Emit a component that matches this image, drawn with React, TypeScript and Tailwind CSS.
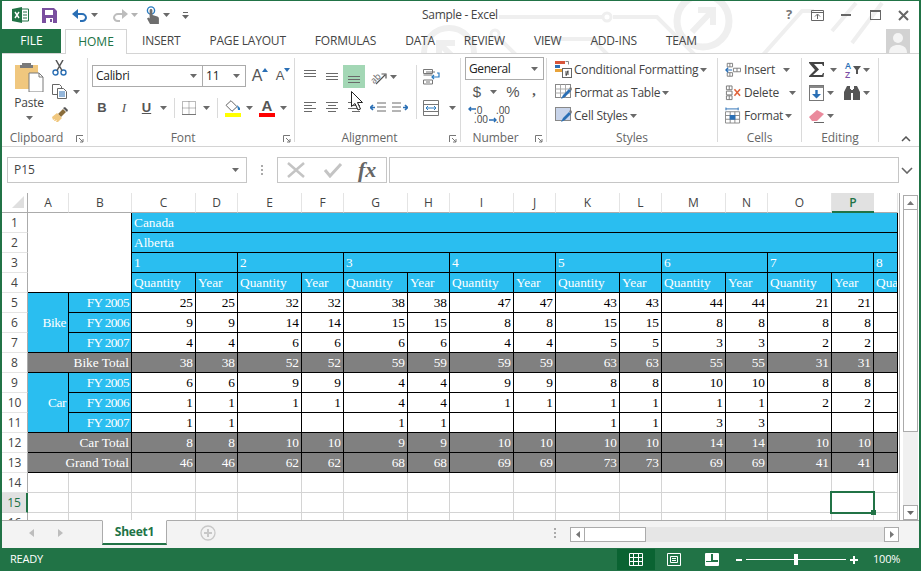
import type { ReactNode } from "react";

const ui = "font-['Open_Sans',sans-serif]";

const Caret = ({ className = "" }: { className?: string }) => (
  <svg width="7" height="4" viewBox="0 0 7 4" className={`shrink-0 ${className}`}>
    <path d="M0 0h7L3.5 4z" fill="#6a6a6a" />
  </svg>
);

const Launcher = () => (
  <svg width="8" height="8" viewBox="0 0 8 8" className="absolute right-[3px] top-[5px]">
    <path d="M0.5 7V0.5H7M3 3l4 4M4 7h3V4" fill="none" stroke="#777" strokeWidth="1" />
  </svg>
);

const Slot = ({ className = "", children }: { className?: string; children?: ReactNode }) => (
  <div className={`flex shrink-0 items-center justify-center ${className}`}>{children}</div>
);

const Lines = ({ rows, dy = 0 }: { rows: [number, number][]; dy?: number }) => (
  <svg width="16" height="14" viewBox="0 0 16 14">
    {rows.map(([a, b], i) => (
      <rect key={i} x={a} y={dy + i * 3} width={b - a} height="1" fill="#6a6a6a" />
    ))}
  </svg>
);

const Watermark = () => (
  <svg width="921" height="53" viewBox="0 0 921 53" className="absolute left-0 top-0" fill="none" stroke="#efefef">
    <circle cx="701" cy="20" r="26" strokeWidth="7" />
    <path d="M690 31l20-21M696 9h15v15" strokeWidth="6" />
    <circle cx="447" cy="52" r="25" strokeWidth="6" />
    <path d="M457 62l-18-18M437 58V42h16" strokeWidth="6" />
    <path d="M497 16h103M611 16h44l42 42" strokeWidth="4" />
    <circle cx="605" cy="16" r="4" strokeWidth="3" />
    <circle cx="493" cy="33" r="4" strokeWidth="3" />
    <path d="M496 36l18 18M540 38h50l20 20M760 55l40-45 12 0M830 30l24-28M880 2l-30 40" strokeWidth="4" />
  </svg>
);

const ExcelLogo = () => (
  <svg width="17" height="16" viewBox="0 0 17 16">
    <path d="M9 2h7.5v12H9z" fill="#fff" stroke="#217346" />
    <path d="M11 5h4M11 8h4M11 11h4" stroke="#217346" />
    <path d="M0 2l10-2v16L0 14z" fill="#217346" />
    <path d="M3 5l4 6M7 5l-4 6" stroke="#fff" strokeWidth="1.4" />
  </svg>
);

const SaveIcon = () => (
  <svg width="15" height="15" viewBox="0 0 15 15">
    <path d="M0 0h12l3 3v12H0z" fill="#7a4f9f" />
    <rect x="3" y="2" width="8" height="5" fill="#fff" />
    <rect x="4" y="10" width="7" height="5" fill="#fff" />
    <rect x="8" y="11" width="2" height="3" fill="#7a4f9f" />
  </svg>
);

const UndoIcon = ({ color, flip = false }: { color: string; flip?: boolean }) => (
  <svg width="16" height="13" viewBox="0 0 16 13" className={flip ? "-scale-x-100" : ""}>
    <path d="M2 5h8a4 4 0 0 1 4 4 4 4 0 0 1-4 3H8" fill="none" stroke={color} strokeWidth="2" />
    <path d="M6 0v10L0 5z" fill={color} />
  </svg>
);

const TouchIcon = () => (
  <svg width="13" height="18" viewBox="0 0 13 18">
    <circle cx="5" cy="4.5" r="3.6" fill="none" stroke="#2a7bc0" strokeWidth="1.4" />
    <path d="M3.6 4.5a1.4 1.4 0 0 1 2.8 0V9l5 1.5q1.5.5 1.5 2V18H4L1 12.5l1.5-1L3.6 12.5z" fill="#6e6e6e" />
  </svg>
);

const PasteIcon = () => (
  <svg width="30" height="30" viewBox="0 0 30 30">
    <path d="M1 3h23v24H1z" fill="#f0c77e" />
    <path d="M8 3V1h9v2h2v3H6V3z" fill="#7a7a7a" />
    <path d="M15 11h10l4 4v15H15z" fill="#fff" stroke="#7a7a7a" />
    <path d="M25 11v4h4" fill="none" stroke="#7a7a7a" />
  </svg>
);

const CutIcon = () => (
  <svg width="15" height="16" viewBox="0 0 15 16" fill="none" stroke="#2a6fb5" strokeWidth="1.4">
    <circle cx="3.5" cy="12.5" r="2.5" />
    <circle cx="11.5" cy="12.5" r="2.5" />
    <path d="M5 10.5L11 0M10 10.5L4 0" stroke="#555" strokeWidth="1.5" />
  </svg>
);

const CopyIcon = () => (
  <svg width="15" height="15" viewBox="0 0 15 15" fill="#fff" stroke="#666">
    <path d="M.5.5h7l2 2v8H.5z" />
    <path d="M5.5 4.5h6l3 3v7h-9z" />
    <path d="M7 8h6M7 10h6M7 12h6" stroke="#2a6fb5" />
  </svg>
);

const PainterIcon = () => (
  <svg width="16" height="15" viewBox="0 0 16 15">
    <path d="M6 7l5-5 3 3-5 5z" fill="#8a6d3b" />
    <path d="M11 1l2-1 3 3-1 2z" fill="#555" />
    <path d="M0 10l5-4 5 5-4 4H4l1-2-2 1-1 0 1-2-2 1z" fill="#f0c77e" />
  </svg>
);

const GrowA = ({ size, up }: { size: string; up: boolean }) => (
  <div className="flex items-start">
    <span className={`${size} leading-[18px] text-[#555] font-['Liberation_Sans',sans-serif]`}>A</span>
    <svg width="6" height="4" viewBox="0 0 6 4" className="mt-[1px]">
      <path d={up ? "M0 4h6L3 0z" : "M0 0h6L3 4z"} fill="#2a6fb5" />
    </svg>
  </div>
);

const BordersIcon = () => (
  <svg width="14" height="14" viewBox="0 0 14 14" fill="none" stroke="#777" strokeDasharray="1 1">
    <path d="M.5.5h13v13H.5zM7 .5v13M.5 7h13" />
    <path d="M0 13.5h14" strokeDasharray="none" />
  </svg>
);

const FillIcon = () => (
  <div className="flex flex-col items-center">
    <svg width="16" height="12" viewBox="0 0 16 12">
      <path d="M6 0.7l6 6-5 4.6-6-6z" fill="#fff" stroke="#666" />
      <path d="M12 5l3 3v2h-2z" fill="#2a7bc0" />
    </svg>
    <div className="mt-[1px] h-[4px] w-[16px] bg-[#ffff00]" />
  </div>
);

const FontColorIcon = () => (
  <div className="flex flex-col items-center">
    <span className="h-[13px] text-[15px] font-semibold leading-[13px] text-[#555] font-['Liberation_Sans',sans-serif]">A</span>
    <div className="mt-[1px] h-[4px] w-[16px] bg-[#ff0000]" />
  </div>
);

const OrientIcon = () => (
  <svg width="18" height="16" viewBox="0 0 18 16" fill="none" className="overflow-visible">
    <text x="1" y="14" transform="rotate(-45 4 11)" fontSize="9" fill="#666" stroke="none">ab</text>
    <path d="M6 15L15 6M11.500 5H16v4.500" stroke="#555" strokeWidth="1.200" />
  </svg>
);

const WrapIcon = () => (
  <svg width="17" height="16" viewBox="0 0 17 16" fill="none">
    <path d="M.5.5h9v4h-9zM.5 11h9v4h-9z" stroke="#777" />
    <path d="M.5 6h9" stroke="#777" />
    <path d="M3 3h9M3 13h4" stroke="#777" />
    <path d="M14 4h2v4h-7M11 6l-2 2 2 2" stroke="#2a7bc0" strokeWidth="1.2" />
  </svg>
);

const MergeIcon = () => (
  <svg width="16" height="16" viewBox="0 0 16 16" fill="none" stroke="#777">
    <path d="M.5.5h15v15H.5zM.5 4.5h15M.5 11.5h15" />
    <path d="M3 8h10M5 6L3 8l2 2M11 6l2 2-2 2" stroke="#2a7bc0" />
  </svg>
);

const IndentIcon = ({ flip = false }: { flip?: boolean }) => (
  <svg width="16" height="11" viewBox="0 0 16 11" className={flip ? "-scale-x-100" : ""}>
    <path d="M7 1h9M7 5h9M7 9h9" stroke="#6a6a6a" />
    <path d="M0 5.5h5M3 3L.5 5.5 3 8" fill="none" stroke="#2a6fb5" strokeWidth="1.6" />
  </svg>
);

const DecimalIcon = ({ more }: { more: boolean }) => (
  <div className="relative h-[18px] w-[18px]">
    <span className="absolute left-[5px] top-0 text-[10px] leading-[9px] text-[#444]">{more ? ".0" : ".00"}</span>
    <span className="absolute left-[5px] top-[9px] text-[10px] leading-[9px] text-[#444]">{more ? ".00" : ".0"}</span>
    <svg width="8" height="6" viewBox="0 0 8 6" className={`absolute ${more ? "left-[-1px] top-0" : "left-[-2px] top-[11px]"}`}>
      <path d={more ? "M8 3H1M3 1L1 3l2 2" : "M0 3h7M5 1l2 2-2 2"} fill="none" stroke="#2a6fb5" strokeWidth="1.4" />
    </svg>
  </div>
);

const CondIcon = () => (
  <svg width="17" height="17" viewBox="0 0 17 17">
    <rect x="0" y="0" width="10" height="3" fill="#d8553a" />
    <rect x="0" y="4" width="5" height="3" fill="#2a6fb5" />
    <rect x="0" y="8" width="7" height="3" fill="#e8a33a" />
    <path d="M10.5 0.5h3v3M5 11.5" fill="none" stroke="#888" />
    <rect x="7.5" y="7.5" width="9" height="9" fill="#fff" stroke="#666" />
    <path d="M10 11h4M10 13h4M13 9.5l-2 5.5" stroke="#444" fill="none" />
  </svg>
);

const TableIcon = ({ filled = false }: { filled?: boolean }) => (
  <svg width="17" height="17" viewBox="0 0 17 17">
    <rect x="0.5" y="0.5" width="15" height="13" fill={filled ? "#c8d4ea" : "#fff"} stroke="#888" />
    {!filled && <path d="M.5 5h15M.5 9h15M5.5.5v13M10.5.5v13" stroke="#aaa" />}
    <path d="M6 15l2-4 6-6 2 2-6 6z" fill="#2a6fb5" />
    <path d="M14 4l2-1 1 2-1 2z" fill="#777" />
  </svg>
);

const CellsInsert = () => (
  <svg width="16" height="16" viewBox="0 0 18 16" fill="none" stroke="#777">
    <path d="M2.5.5h6v4h-6zM2.5 11h6v4h-6zM5.500.5v4M5.500 11v4" />
    <path d="M9.500 6h8v4h-8zM13.500 6v4" />
    <path d="M8 8H1M3.500 5.500L1 8l2.500 2.500" stroke="#2a6fb5" strokeWidth="1.400" />
  </svg>
);

const CellsDelete = () => (
  <svg width="16" height="16" viewBox="0 0 17 16" fill="none" stroke="#777">
    <path d="M1.500.5h6v4h-6zM1.500 11h6v4h-6zM4.500.5v4M4.500 11v4M1.500 6h6v4h-6z" />
    <path d="M10 4l6 7M16 4l-6 7" stroke="#e0643c" strokeWidth="1.700" />
  </svg>
);

const CellsFormat = () => (
  <svg width="16" height="17" viewBox="0 0 17 17" fill="none" stroke="#888">
    <path d="M.5 4.500h15v12H.5zM.5 8.500h15M.5 12.500h15M5.500 4.500v12M10.500 4.500v12" />
    <rect x="5" y="8" width="6" height="5" fill="#2a6fb5" stroke="none" />
    <path d="M1 1.500h13M1 0v3M14 0v3" stroke="#2a6fb5" />
  </svg>
);

const SigmaIcon = () => (
  <svg width="16" height="15" viewBox="0 0 16 15">
    <path d="M0 0h15v4h-1l-1-2H5l5 5.500L4 13h9l1-2h1l-.5 4H0v-1l6-6L0 1z" fill="#444" />
  </svg>
);

const SortIcon = () => (
  <div className="relative h-[18px] w-[17px]">
    <span className="absolute left-0 top-0 text-[9px] font-semibold leading-[9px] text-[#2a6fb5]">A</span>
    <span className="absolute left-0 top-[9px] text-[9px] font-semibold leading-[9px] text-[#7b4fa6]">Z</span>
    <svg width="8" height="8" viewBox="0 0 8 8" className="absolute left-[8px] top-[5px]">
      <path d="M0 0h8L5 4v4H3V4z" fill="#555" />
    </svg>
  </div>
);

const FillDownIcon = () => (
  <svg width="15" height="16" viewBox="0 0 15 16">
    <rect x="0.500" y="0.500" width="14" height="15" fill="#fff" stroke="#777" />
    <rect x="1" y="1" width="13" height="2" fill="#888" />
    <path d="M6.300 5h2.400v4H12l-4.500 4.500L3 9h3.300z" fill="#2a6fb5" />
  </svg>
);

const BinocularsIcon = () => (
  <svg width="16" height="14" viewBox="0 0 16 14" fill="#555">
    <path d="M3 0h3v3h1v7H0V6zM10 0h3l3 6v4H9V3h1z" />
    <rect x="0" y="10" width="7" height="4" />
    <rect x="9" y="10" width="7" height="4" />
    <rect x="7" y="4" width="2" height="3" />
  </svg>
);

const EraserIcon = () => (
  <svg width="16" height="14" viewBox="0 0 16 14">
    <path d="M0 8l8-7 7 4-7 7H3z" fill="#ea8a9c" />
    <path d="M5 13.500h10" stroke="#666" />
  </svg>
);

const Group = ({ className, label, launcher, children }: { className: string; label: string; launcher?: boolean; children: ReactNode }) => (
  <div className={`flex h-full shrink-0 flex-col border-r border-[#dadada] ${className}`}>
    <div className="min-h-0 flex-1">{children}</div>
    <div className={`relative mb-[-4px] h-[16px] text-center text-[12px] leading-[16px] tracking-[-0.1px] text-[#666] ${launcher ? "pr-[16px]" : ""}`}>
      {label}
      {launcher && <Launcher />}
    </div>
  </div>
);

const StyleRow = ({ icon, label, caretClass = "ml-[2px]" }: { icon: ReactNode; label: string; caretClass?: string }) => (
  <div className="flex h-[23px] items-center">
    <div className="flex w-[19px] shrink-0">{icon}</div>
    <span className="text-[12px] tracking-[-0.2px] text-[#444]">{label}</span>
    <Caret className={caretClass} />
  </div>
);

const Ribbon = () => (
  <div className="flex h-[93px] shrink-0 border-b border-[#d4d4d4] pb-[4px] pl-0 pt-[4px]">
    <Group className="w-[86px]" label="Clipboard" launcher>
      <div className="flex">
        <div className="ml-[6px] flex w-[42px] flex-col items-center pt-[4px]">
          <PasteIcon />
          <span className="mt-[3px] text-[12px] leading-[16px] tracking-[-0.2px] text-[#444]">Paste</span>
          <Caret className="mt-[5px]" />
        </div>
        <div className="ml-[2px] flex flex-col pt-[2px]">
          <CutIcon />
          <div className="mt-[8px] flex items-center"><CopyIcon /><Caret className="ml-[6px]" /></div>
          <div className="mt-[8px]"><PainterIcon /></div>
        </div>
      </div>
    </Group>

    <Group className="w-[207px]" label="Font" launcher>
      <div className="ml-[4px] mt-[7px] flex h-[22px] items-center">
        <div className="flex h-[22px] w-[111px] items-center justify-between border border-[#ababab] pl-[3px] pr-[5px] text-[12px] tracking-[-0.3px] text-[#222]">
          Calibri<Caret />
        </div>
        <div className="-ml-px flex h-[22px] w-[44px] items-center justify-between border border-[#ababab] pl-[3px] pr-[5px] text-[12px] text-[#222]">
          11<Caret />
        </div>
        <Slot className="ml-[5px] w-[18px]"><GrowA size="text-[16px]" up /></Slot>
        <Slot className="ml-[5px] w-[18px]"><GrowA size="text-[13px]" up={false} /></Slot>
      </div>
      <div className="ml-[3px] mt-[11px] flex h-[20px] items-center text-[#555]">
        <Slot className="w-[22px] text-[13px] font-bold font-['Liberation_Sans',sans-serif]">B</Slot>
        <Slot className="w-[22px] text-[13px] italic font-['Liberation_Serif',serif]">I</Slot>
        <Slot className="w-[23px] text-[13px] font-semibold underline font-['Liberation_Sans',sans-serif]">U</Slot>
        <Slot className="w-[11px]"><Caret /></Slot>
        <div className="ml-[5px] h-[20px] w-px bg-[#dadada]" />
        <Slot className="ml-[3px] w-[22px]"><BordersIcon /></Slot>
        <Slot className="w-[12px]"><Caret /></Slot>
        <div className="ml-[5px] h-[20px] w-px bg-[#dadada]" />
        <Slot className="ml-[4px] w-[22px]"><FillIcon /></Slot>
        <Slot className="w-[10px]"><Caret /></Slot>
        <Slot className="ml-[2px] w-[22px]"><FontColorIcon /></Slot>
        <Slot className="w-[10px]"><Caret /></Slot>
      </div>
    </Group>

    <Group className="w-[166px]" label="Alignment" launcher>
      <div className="flex pl-[4px] pt-[7px]">
        <div className="flex w-[117px] flex-col gap-[8px]">
          <div className="flex h-[23px] items-center">
            <Slot className="w-[22px]"><Lines rows={[[2, 14], [2, 14], [2, 14]]} /></Slot>
            <Slot className="w-[22px]"><Lines rows={[[2, 14], [2, 14], [2, 14]]} dy={3} /></Slot>
            <Slot className="h-[23px] w-[22px] bg-[#a3d7b5]"><Lines rows={[[2, 14], [2, 14], [2, 14]]} dy={6} /></Slot>
            <Slot className="ml-[3px] w-[22px]"><OrientIcon /></Slot>
            <Caret />
          </div>
          <div className="flex h-[23px] items-center">
            <Slot className="w-[22px]"><Lines rows={[[2, 14], [2, 10], [2, 14], [2, 10]]} dy={1} /></Slot>
            <Slot className="w-[22px]"><Lines rows={[[2, 14], [4, 12], [2, 14], [4, 12]]} dy={1} /></Slot>
            <Slot className="w-[22px]"><Lines rows={[[2, 14], [6, 14], [2, 14], [6, 14]]} dy={1} /></Slot>
            <Slot className="ml-[2px] w-[22px]"><IndentIcon /></Slot>
            <Slot className="w-[22px]"><IndentIcon flip /></Slot>
          </div>
        </div>
        <div className="h-[54px] w-px bg-[#dadada]" />
        <div className="flex flex-col gap-[8px] pl-[3px]">
          <Slot className="h-[23px] w-[22px] justify-start pl-[3px]"><WrapIcon /></Slot>
          <div className="flex h-[23px] items-center pl-[3px]">
            <MergeIcon /><Caret className="ml-[10px]" />
          </div>
        </div>
      </div>
    </Group>

    <Group className="w-[86px]" label="Number" launcher>
      <div className="ml-[4px] mt-[-1px] flex h-[23px] w-[79px] items-center justify-between border border-[#ababab] pl-[3px] pr-[5px] text-[12px] tracking-[-0.4px] text-[#222]">
        General<Caret />
      </div>
      <div className="ml-[6px] mt-[2px] flex h-[20px] items-center text-[#555]">
        <Slot className="w-[20px] text-[15px] font-['Liberation_Sans',sans-serif]">$</Slot>
        <Slot className="ml-[1px] w-[10px]"><Caret /></Slot>
        <Slot className="ml-[3px] w-[24px] text-[15px] font-['Liberation_Sans',sans-serif]">%</Slot>
        <Slot className="w-[18px] pb-[3px] text-[14px] font-bold font-['Liberation_Serif',serif]">,</Slot>
      </div>
      <div className="ml-[8px] mt-[3px] flex h-[20px] items-center gap-[4px]">
        <DecimalIcon more />
        <DecimalIcon more={false} />
      </div>
    </Group>

    <Group className="w-[171px]" label="Styles">
      <div className="pl-[8px]">
        <StyleRow icon={<CondIcon />} label="Conditional Formatting" />
        <StyleRow icon={<TableIcon />} label="Format as Table" />
        <StyleRow icon={<TableIcon filled />} label="Cell Styles" />
      </div>
    </Group>

    <Group className="w-[84px]" label="Cells">
      <div className="pl-[7px]">
        <StyleRow icon={<CellsInsert />} label="Insert" caretClass="ml-[8px]" />
        <StyleRow icon={<CellsDelete />} label="Delete" caretClass="ml-[10px]" />
        <StyleRow icon={<CellsFormat />} label="Format" caretClass="ml-[2px]" />
      </div>
    </Group>

    <Group className="w-[77px]" label="Editing">
      <div className="flex flex-col pl-[7px]">
        <div className="flex h-[23px] items-center">
          <SigmaIcon />
          <Caret className="ml-[5px]" />
          <div className="ml-[8px]"><SortIcon /></div>
          <Caret className="ml-[1px]" />
        </div>
        <div className="flex h-[23px] items-center">
          <FillDownIcon />
          <Caret className="ml-[3px]" />
          <div className="ml-[10px]"><BinocularsIcon /></div>
          <Caret className="ml-[3px]" />
        </div>
        <div className="flex h-[23px] items-center">
          <EraserIcon />
          <Caret className="ml-[2px]" />
        </div>
      </div>
    </Group>

    <div className="ml-[22px] flex items-end">
      <svg width="10" height="6" viewBox="0 0 10 6">
        <path d="M1 5l4-4 4 4" fill="none" stroke="#555" strokeWidth="1.500" />
      </svg>
    </div>
  </div>
);

const TitleBar = () => (
  <div className="relative z-10 flex h-[28px] shrink-0 items-center">
    <div className="ml-[10px]"><ExcelLogo /></div>
    <div className="ml-[13px]"><SaveIcon /></div>
    <div className="ml-[15px]"><UndoIcon color="#2a6fb5" /></div>
    <Caret className="ml-[3px]" />
    <div className="ml-[14px]"><UndoIcon color="#bdbdbd" flip /></div>
    <Caret className="ml-[3px] opacity-50" />
    <div className="ml-[8px]"><TouchIcon /></div>
    <Caret className="ml-[4px]" />
    <svg width="7" height="7" viewBox="0 0 7 7" className="ml-[12px]">
      <path d="M1 .5h5" stroke="#666" />
      <path d="M0 3h7L3.500 7z" fill="#666" />
    </svg>
    <div className="absolute left-[420px] text-[12px] tracking-[-0.3px] text-[#444]">Sample - Excel</div>
    <div className="ml-auto flex items-center">
      <span className="w-[12px] text-center text-[13px] font-bold text-[#777]">?</span>
      <svg width="13" height="11" viewBox="0 0 13 11" fill="none" stroke="#666" className="ml-[16px]">
        <path d="M.5.5h12v10H.5zM.5 2.500h12M6.500 9V4.500M4 6.500l2.500-2.500L9 6.500" />
      </svg>
      <div className="ml-[17px] h-[2px] w-[10px] bg-[#666]" />
      <div className="ml-[19px] h-[10px] w-[11px] border border-t-2 border-[#666]" />
      <svg width="11" height="11" viewBox="0 0 11 11" className="ml-[17px] mr-[10px]">
        <path d="M1 1l9 9M10 1l-9 9" stroke="#666" strokeWidth="2" />
      </svg>
    </div>
  </div>
);

const tabs = ["INSERT", "PAGE LAYOUT", "FORMULAS", "DATA", "REVIEW", "VIEW", "ADD-INS", "TEAM"];

const TabBar = () => (
  <div className="relative z-10 flex h-[25px] shrink-0 border-b border-[#d4d4d4]">
    <div className="flex h-[24px] w-[59px] items-center justify-center bg-[#217346] text-[12px] text-white">FILE</div>
    <div className="ml-[4px] flex h-[25px] w-[62px] items-center justify-center border-x border-t border-[#d4d4d4] bg-white text-[12px] text-[#217346]">HOME</div>
    <div className="ml-[15px] flex gap-[29px] text-[12px] leading-[24px] tracking-[-0.2px] text-[#444]">
      {tabs.map((t) => (
        <span key={t}>{t}</span>
      ))}
    </div>
    <div className="ml-auto mr-[9px] flex h-[24px] w-[24px] items-end justify-center overflow-hidden bg-[#d2d2d2]">
      <svg width="24" height="24" viewBox="0 0 24 24">
        <circle cx="12" cy="9" r="5" fill="#f4f4f4" />
        <path d="M3 24q0-7 7-8h4q7 1 7 8z" fill="#f4f4f4" />
      </svg>
    </div>
  </div>
);

const FormulaBar = () => (
  <div className="ml-[5px] mt-[10px] flex h-[26px] shrink-0 items-center">
    <div className="flex h-[26px] w-[240px] items-center justify-between border border-[#c6c6c6] pl-[6px] pr-[7px] text-[12px] text-[#444]">
      P15<Caret />
    </div>
    <div className="ml-[14px] flex flex-col gap-[2px]">
      <div className="h-[2px] w-[2px] bg-[#aaa]" />
      <div className="h-[2px] w-[2px] bg-[#aaa]" />
      <div className="h-[2px] w-[2px] bg-[#aaa]" />
    </div>
    <div className="ml-[14px] flex h-[26px] w-[110px] items-center border border-[#c6c6c6]">
      <svg width="18" height="16" viewBox="0 0 18 16" className="ml-[9px]">
        <path d="M1 1l16 14M17 1L1 15" stroke="#c4c4c4" strokeWidth="2.500" />
      </svg>
      <svg width="20" height="16" viewBox="0 0 18 16" className="ml-[18px]">
        <path d="M1 8l5 6L17 2" fill="none" stroke="#c4c4c4" strokeWidth="3" />
      </svg>
      <span className="ml-[15px] text-[22px] font-bold italic leading-[22px] text-[#666] font-['Liberation_Serif',serif]">fx</span>
    </div>
    <div className="ml-[2px] h-[26px] w-[510px] border border-[#c6c6c6]" />
    <svg width="12" height="7" viewBox="0 0 12 7" className="ml-[2px]">
      <path d="M1 1l5 5 5-5" fill="none" stroke="#666" strokeWidth="1.600" />
    </svg>
  </div>
);

const columns = ["A", "B", "C", "D", "E", "F", "G", "H", "I", "J", "K", "L", "M", "N", "O", "P", ""];
const pairs = [1, 2, 3, 4, 5, 6, 7];

type Row = { kind: "data" | "total"; label: string; group?: string; values: string[] };

const rows: Row[] = [
  { kind: "data", group: "Bike", label: "FY 2005", values: "25 25 32 32 38 38 47 47 43 43 44 44 21 21".split(" ") },
  { kind: "data", label: "FY 2006", values: "9 9 14 14 15 15 8 8 15 15 8 8 8 8".split(" ") },
  { kind: "data", label: "FY 2007", values: "4 4 6 6 6 6 4 4 5 5 3 3 2 2".split(" ") },
  { kind: "total", label: "Bike Total", values: "38 38 52 52 59 59 59 59 63 63 55 55 31 31".split(" ") },
  { kind: "data", group: "Car", label: "FY 2005", values: "6 6 9 9 4 4 9 9 8 8 10 10 8 8".split(" ") },
  { kind: "data", label: "FY 2006", values: "1 1 1 1 4 4 1 1 1 1 1 1 2 2".split(" ") },
  { kind: "data", label: "FY 2007", values: "1 1 _ _ 1 1 _ _ 1 1 3 3 _ _".split(" ") },
  { kind: "total", label: "Car Total", values: "8 8 10 10 9 9 10 10 10 10 14 14 10 10".split(" ") },
  { kind: "total", label: "Grand Total", values: "46 46 62 62 68 68 69 69 73 73 69 69 41 41".split(" ") },
];

const RowHead = ({ n, active = false }: { n: number; active?: boolean }) => (
  <div
    className={`flex items-center justify-center border-b text-[12px] ${ui} ${
      active
        ? "border-b-[#d4d4d4] border-r-2 border-r-[#217346] bg-[#e1e1e1] text-[#217346]"
        : "border-b-[#e4e4e4] border-r border-r-[#ababab] text-[#444]"
    }`}
  >
    {n}
  </div>
);

const blue = "overflow-hidden whitespace-nowrap border-b border-r border-black bg-[#2abef0] px-[2px] text-white";
const gray = "overflow-hidden whitespace-nowrap border-b border-r border-black bg-[#808080] px-[2px] text-right text-white";
const plain = "overflow-hidden whitespace-nowrap border-b border-r border-black bg-white px-[2px] text-right text-black";
const empty = "border-b border-r border-[#d4d4d4] bg-white";

const Sheet = () => (
  <div className="mt-[10px] flex h-[327px] shrink-0">
    <div className="relative w-[898px] shrink-0 overflow-hidden border-r border-[#ababab]">
      <div className="grid grid-cols-[26px_41px_63px_64px_42px_64px_42px_64px_42px_64px_42px_64px_42px_64px_42px_64px_42px_24px] auto-rows-[20px] text-[13.33px] leading-[19px] font-['Liberation_Serif',serif]">
        <div className="flex items-end justify-end border-b border-r border-[#ababab] pb-[4px] pr-[3px]">
          <svg width="12" height="12" viewBox="0 0 12 12">
            <path d="M12 0v12H0z" fill="#dfdfdf" />
          </svg>
        </div>
        {columns.map((c, i) => (
          <div
            key={i}
            className={`flex items-center justify-center border-b text-[12px] ${ui} ${
              c === "P"
                ? "border-b-2 border-b-[#217346] bg-[#e1e1e1] font-semibold text-[#217346]"
                : "border-b-[#ababab] border-r border-r-[#e4e4e4] text-[#444]"
            }`}
          >
            {c}
          </div>
        ))}

        <RowHead n={1} />
        <div className="col-span-2 row-span-4 border-b border-r border-black bg-white" />
        <div className={`${blue} col-[4/-1]`}>Canada</div>
        <RowHead n={2} />
        <div className={`${blue} col-[4/-1]`}>Alberta</div>
        <RowHead n={3} />
        {pairs.map((p) => (
          <div key={p} className={`${blue} col-span-2`}>{p}</div>
        ))}
        <div className={blue}>8</div>
        <RowHead n={4} />
        {pairs.map((p) => [
          <div key={`q${p}`} className={blue}>Quantity</div>,
          <div key={`y${p}`} className={blue}>Year</div>,
        ])}
        <div className={blue}>Quantity</div>

        {rows.map((r, i) => (
          <div key={i} className="contents">
            <RowHead n={i + 5} />
            {r.kind === "total" ? (
              <div className={`${gray} col-span-2`}>{r.label}</div>
            ) : (
              <>
                {r.group && (
                  <div className={`${blue} row-span-3 flex items-center justify-end tracking-[-0.4px]`}>{r.group}</div>
                )}
                <div className={`${blue} text-right tracking-[-0.6px]`}>{r.label}</div>
              </>
            )}
            {r.values.map((v, j) => (
              <div key={j} className={r.kind === "total" ? gray : plain}>
                {v === "_" ? "" : v}
              </div>
            ))}
            <div className={r.kind === "total" ? gray : plain} />
          </div>
        ))}

        {[14, 15, 16].map((n) => (
          <div key={n} className="contents">
            <RowHead n={n} active={n === 15} />
            {columns.map((_, j) => (
              <div key={j} className={empty} />
            ))}
          </div>
        ))}
      </div>
      {/* selected cell */}
      <div className="absolute left-[828px] top-[298px] h-[23px] w-[45px] border-2 border-[#217346]" />
      <div className="absolute left-[869px] top-[317px] h-[5px] w-[5px] bg-[#217346]" />
    </div>

    <div className="ml-[3px] flex w-[15px] shrink-0 flex-col pt-[2px]">
      <div className="flex h-[15px] items-center justify-center border border-[#ababab] bg-white">
        <svg width="7" height="4" viewBox="0 0 7 4"><path d="M0 4h7L3.500 0z" fill="#777" /></svg>
      </div>
      <div className="h-[222px] border border-t-0 border-[#ababab] bg-white" />
      <div className="flex-1 bg-[#f0f0f0]" />
      <div className="flex h-[15px] items-center justify-center border border-[#ababab] bg-white">
        <Caret />
      </div>
    </div>
  </div>
);

const SheetTabs = () => (
  <div className="flex h-[28px] shrink-0 items-start border-t border-[#ababab] bg-[#f3f3f3]">
    <svg width="5" height="8" viewBox="0 0 5 8" className="ml-[27px] mt-[8px]"><path d="M5 0v8L0 4z" fill="#bdbdbd" /></svg>
    <svg width="5" height="8" viewBox="0 0 5 8" className="ml-[24px] mt-[8px]"><path d="M0 0v8l5-4z" fill="#bdbdbd" /></svg>
    <div className="ml-[39px] mt-[-1px] flex h-[25px] w-[65px] items-center justify-center border-x border-b-2 border-t border-x-[#ababab] border-b-[#217346] border-t-white bg-white text-[12px] font-bold tracking-[-0.2px] text-[#217346]">
      Sheet1
    </div>
    <svg width="16" height="16" viewBox="0 0 16 16" className="ml-[33px] mt-[4px]" fill="none" stroke="#c8c8c8">
      <circle cx="8" cy="8" r="7" strokeWidth="1.300" />
      <path d="M8 4v8M4 8h8" strokeWidth="2" />
    </svg>
    <div className="ml-[338px] mt-[7px] flex flex-col gap-[2px]">
      <div className="h-[2px] w-[2px] bg-[#aaa]" />
      <div className="h-[2px] w-[2px] bg-[#aaa]" />
      <div className="h-[2px] w-[2px] bg-[#aaa]" />
    </div>
    <div className="ml-[14px] mt-[6px] flex h-[15px] w-[329px] bg-[#e6e6e6]">
      <div className="flex w-[15px] items-center justify-center border border-[#ababab] bg-white">
        <svg width="4" height="7" viewBox="0 0 4 7"><path d="M4 0v7L0 3.500z" fill="#777" /></svg>
      </div>
      <div className="w-[61px] border-y border-r border-[#ababab] bg-white" />
      <div className="flex-1" />
      <div className="flex w-[15px] items-center justify-center border border-[#ababab] bg-white">
        <svg width="4" height="7" viewBox="0 0 4 7"><path d="M0 0v7l4-3.500z" fill="#777" /></svg>
      </div>
    </div>
  </div>
);

const StatusBar = () => (
  <div className="-mx-[2px] flex h-[23px] shrink-0 items-center bg-[#217346] text-[12px] text-white">
    <span className="ml-[10px] w-[32px] text-[11px] tracking-[-0.2px]">READY</span>
    <div className="ml-[575px] flex h-[21px] w-[38px] items-center justify-center bg-[#0a6332]">
      <svg width="14" height="13" viewBox="0 0 14 13" fill="none" stroke="#fff">
        <path d="M.5.500h13v12H.5zM.5 4.500h13M.5 8.500h13M4.500.500v12M9.500.500v12" />
      </svg>
    </div>
    <svg width="14" height="13" viewBox="0 0 14 13" fill="none" stroke="#fff" className="ml-[12px]">
      <path d="M.5.500h13v12H.5z" />
      <path d="M3.500 3.500h7v6h-7zM5 5.500h4M5 7.500h4" />
    </svg>
    <svg width="14" height="13" viewBox="0 0 14 13" className="ml-[24px]">
      <path d="M.5.500h13v12H.5z" fill="none" stroke="#fff" />
      <path d="M1 1h5v7H1zM8 1h5v6H8zM1 9h12v3H1z" fill="#fff" />
    </svg>
    <div className="ml-[17px] h-[2px] w-[6px] bg-white" />
    <div className="relative ml-[4px] h-px w-[100px] bg-white">
      <div className="absolute left-[48px] top-[-5px] h-[11px] w-[4px] bg-white" />
    </div>
    <svg width="8" height="8" viewBox="0 0 8 8" className="ml-[4px]">
      <path d="M4 0v8M0 4h8" stroke="#fff" strokeWidth="2" />
    </svg>
    <span className="ml-[15px] text-[11px] tracking-[-0.2px]">100%</span>
  </div>
);

export default function App() {
  return (
    <div className={`relative flex h-[571px] w-[921px] flex-col overflow-hidden border-x-2 border-t border-[#217346] bg-white ${ui}`}>
      <Watermark />
      <TitleBar />
      <TabBar />
      <Ribbon />
      <FormulaBar />
      <Sheet />
      <SheetTabs />
      <StatusBar />
      {/* mouse pointer */}
      <svg width="13" height="20" viewBox="0 0 13 20" className="absolute left-[349px] top-[90px]">
        <path d="M.5.5v15l3.500-3 3 6.500 2.500-1-3-6.500h5z" fill="#fff" stroke="#222" />
      </svg>
    </div>
  );
}
